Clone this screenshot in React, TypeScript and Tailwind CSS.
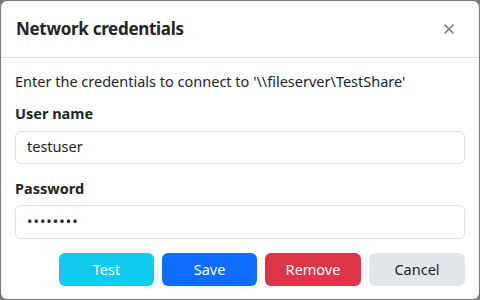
import { X } from 'lucide-react'

export default function App() {
  return (
    <div className="w-[480px] h-[300px] bg-[#7a7a7a] p-px" style={{ fontFamily: '"Noto Sans", "Open Sans", sans-serif' }}>
      <div className="h-full bg-white rounded-[6px] flex flex-col overflow-hidden">
        {/* Header */}
        <div className="h-[57px] flex items-center justify-between pl-[15px] pr-[22px] border-b border-[#dee2e6]">
          <h2 className="text-[17px] font-bold tracking-[-0.3px] text-[#212529]">Network credentials</h2>
          <X size={16} strokeWidth={2.5} className="text-[#808080]" />
        </div>

        {/* Body */}
        <div className="flex-1 px-[14px] pt-[13px] flex flex-col">
          <p className="text-[14.5px] text-[#212529] mb-[10px]">
            Enter the credentials to connect to '\\fileserver\TestShare'
          </p>
          <label className="text-[14.5px] font-bold text-[#212529] mb-[6px]">User name</label>
          <div className="h-[33px] border border-[#dee2e6] rounded-[6px] flex items-center px-[11px] text-[14.5px] text-[#212529] mb-[14px]">
            testuser
          </div>
          <label className="text-[14.5px] font-bold text-[#212529] mb-[6px]">Password</label>
          <div className="h-[34px] border border-[#dee2e6] rounded-[6px] flex items-center px-[11px] text-[14.5px] text-[#212529] tracking-[1px]">
            ••••••••
          </div>

          {/* Actions */}
          <div className="flex justify-end gap-[8px] mt-[14px]">
            <button className="w-[95px] h-[33px] rounded-[6px] bg-[#0dcaf0] text-white text-[14.5px]">Test</button>
            <button className="w-[95px] h-[33px] rounded-[6px] bg-[#0d6efd] text-white text-[14.5px]">Save</button>
            <button className="w-[96px] h-[33px] rounded-[6px] bg-[#dc3545] text-white text-[14.5px]">Remove</button>
            <button className="w-[96px] h-[33px] rounded-[6px] bg-[#e2e5e9] text-[#212529] text-[14.5px]">Cancel</button>
          </div>
        </div>
      </div>
    </div>
  )
}
